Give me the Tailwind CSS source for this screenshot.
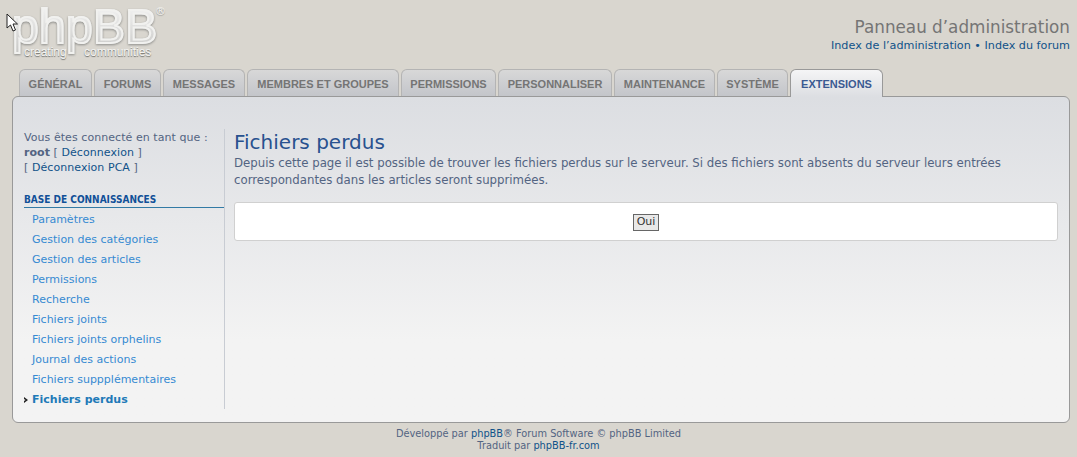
<!doctype html>
<html>

<head>
    <meta charset="UTF-8">
    <meta name="viewport" content="width=device-width, initial-scale=1.0">
    <script src="https://cdn.jsdelivr.net/npm/@tailwindcss/browser@4"></script>
    <title>Fichiers perdus</title>
</head>

<body class="bg-[#d9d6cf] text-[#536482] font-['DejaVu_Sans',sans-serif] text-[11px] h-[457px] overflow-hidden relative">

    <!-- mouse pointer -->
    <svg class="absolute left-[6px] top-[13px] z-10" width="13" height="20" viewBox="0 0 13 20">
        <path d="M1 1 L1 15 L4.5 12 L7 18 L9.5 17 L7 11 L11.5 11 Z" fill="#fff" stroke="#222" stroke-width="1" />
    </svg>

    <div class="h-[69px] flex justify-between pl-[12px] pr-[7px]">
        <div class="relative w-[160px] h-[60px]">
            <span class="absolute left-0 top-[-3px] font-['Liberation_Sans',sans-serif] text-[48px] tracking-[0.3px] leading-[60px] text-transparent bg-linear-to-b from-[#fbfbfb] to-[#c4c4c2] bg-clip-text [-webkit-text-stroke:2px_#f1f1ef] drop-shadow-[0_1px_1px_#8f8f8c]">phpBB</span>
            <span class="absolute left-[12px] top-[45px] font-['Liberation_Sans',sans-serif] text-[12px] leading-[14px] text-[#f4f4f2] [text-shadow:0_1px_1px_#6f6f6c]">creating</span>
            <span class="absolute left-[72px] top-[45px] font-['Liberation_Sans',sans-serif] text-[12px] leading-[14px] text-[#f4f4f2] [text-shadow:0_1px_1px_#6f6f6c]">communities</span>
            <span class="absolute left-[143px] top-[5px] text-[11px] leading-[14px] text-[#f4f4f2] [text-shadow:0_1px_1px_#8f8f8c]">®</span>
        </div>
        <div class="text-right pt-[17px]">
            <div class="text-[16.8px] leading-[20px] text-[#757575]">Panneau d’administration</div>
            <div class="text-[11.2px] leading-[15px] mt-[1px] text-[#105289]">Index de l’administration • Index du forum</div>
        </div>
    </div>

    <div class="flex gap-[2px] pl-[19px] h-[27px] font-['Liberation_Sans',sans-serif] font-bold text-[11px] text-[#757575] relative z-[1]">
        <div class="w-[73px] pt-[2px] flex items-center justify-center h-[27px] border border-b-0 border-[#b4b4b4] rounded-t-[6px] bg-linear-to-b from-[#d8d8d8] to-[#c3c5ca]">GÉNÉRAL</div>
        <div class="w-[67px] pt-[2px] flex items-center justify-center h-[27px] border border-b-0 border-[#b4b4b4] rounded-t-[6px] bg-linear-to-b from-[#d8d8d8] to-[#c3c5ca]">FORUMS</div>
        <div class="w-[82px] pt-[2px] flex items-center justify-center h-[27px] border border-b-0 border-[#b4b4b4] rounded-t-[6px] bg-linear-to-b from-[#d8d8d8] to-[#c3c5ca]">MESSAGES</div>
        <div class="w-[152px] pt-[2px] flex items-center justify-center h-[27px] border border-b-0 border-[#b4b4b4] rounded-t-[6px] bg-linear-to-b from-[#d8d8d8] to-[#c3c5ca]">MEMBRES ET GROUPES</div>
        <div class="w-[95px] pt-[2px] flex items-center justify-center h-[27px] border border-b-0 border-[#b4b4b4] rounded-t-[6px] bg-linear-to-b from-[#d8d8d8] to-[#c3c5ca]">PERMISSIONS</div>
        <div class="w-[114px] pt-[2px] flex items-center justify-center h-[27px] border border-b-0 border-[#b4b4b4] rounded-t-[6px] bg-linear-to-b from-[#d8d8d8] to-[#c3c5ca]">PERSONNALISER</div>
        <div class="w-[101px] pt-[2px] flex items-center justify-center h-[27px] border border-b-0 border-[#b4b4b4] rounded-t-[6px] bg-linear-to-b from-[#d8d8d8] to-[#c3c5ca]">MAINTENANCE</div>
        <div class="w-[71px] pt-[2px] flex items-center justify-center h-[27px] border border-b-0 border-[#b4b4b4] rounded-t-[6px] bg-linear-to-b from-[#d8d8d8] to-[#c3c5ca]">SYSTÈME</div>
        <div class="w-[93px] pt-[2px] flex items-center justify-center h-[28px] border border-b-0 border-[#999] rounded-t-[6px] bg-linear-to-b from-[#f5f5f6] to-[#dcdee2] text-[#3a5a92]">EXTENSIONS</div>
    </div>

    <div class="mx-[12px] w-[1058px] h-[327px] border border-[#999] rounded-[6px] bg-linear-to-b from-[#dcdee2] to-[#f3f3f3] to-[75%] flex pt-[32px] pl-[11px]">
        <div class="w-[201px] h-[280px] border-r border-[#c8ccd3] shrink-0">
            <div class="leading-[15px] pt-[1px] tracking-[0.06px]">
                Vous êtes connecté en tant que :<br>
                <b>root</b> [ <span class="text-[#105289]">Déconnexion</span> ]<br>
                [ <span class="text-[#105289]">Déconnexion PCA</span> ]
            </div>
            <div class="mt-[18px] w-[200px] border-b border-[#327aa5] text-[#115098] font-['DejaVu_Sans_Condensed',sans-serif] font-bold text-[10px] leading-[14px] h-[15px]">BASE DE CONNAISSANCES</div>
            <ul class="text-[#368ad2] leading-[20px] pl-[8px] pt-[2px]">
                <li>Paramètres</li>
                <li>Gestion des catégories</li>
                <li>Gestion des articles</li>
                <li>Permissions</li>
                <li>Recherche</li>
                <li>Fichiers joints</li>
                <li>Fichiers joints orphelins</li>
                <li>Journal des actions</li>
                <li>Fichiers suppplémentaires</li>
                <li class="relative font-bold text-[#1e7ab8]">
                    <svg class="absolute left-[-8px] top-[7px]" width="4" height="6" viewBox="0 0 4 6">
                        <path d="M0 0 L4 3 L0 6 L0 4 L1.5 3 L0 2 Z" fill="#222" />
                    </svg>
                    Fichiers perdus
                </li>
            </ul>
        </div>
        <div class="ml-[9px] w-[824px]">
            <h1 class="text-[20px] leading-[24px] mt-[1px] text-[#28518f]">Fichiers perdus</h1>
            <p class="text-[11.76px] leading-[17px] mt-[1px]">Depuis cette page il est possible de trouver les fichiers perdus sur le serveur. Si des fichiers sont absents du serveur leurs entrées correspondantes dans les articles seront supprimées.</p>
            <div class="mt-[13px] h-[39px] bg-white border border-[#d0d0d0] rounded-[3px] flex justify-center items-center">
                <button class="w-[26px] h-[17px] bg-[#e8e8e8] border border-[#666] text-[11px] leading-[14px] text-[#333] mt-[1px]">Oui</button>
            </div>
        </div>
    </div>

    <div class="text-center text-[9.8px] leading-[12px] mt-[5px] text-[#536482]">
        Développé par <span class="text-[#105289]">phpBB</span>® Forum Software © phpBB Limited<br>
        Traduit par <span class="text-[#105289]">phpBB-fr.com</span>
    </div>

</body>

</html>
